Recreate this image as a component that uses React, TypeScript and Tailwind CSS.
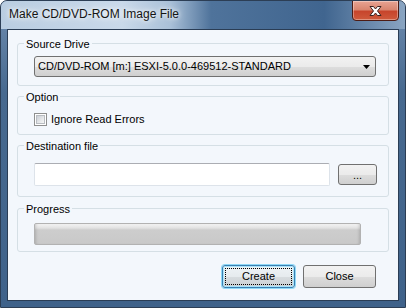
const ui = { fontFamily: '"Liberation Sans", Arial, sans-serif' };

function Group({
  label,
  className,
  children,
}: {
  label: string;
  className: string;
  children: React.ReactNode;
}) {
  return (
    <div className={["relative mx-[9px] rounded-[3px] border border-[#d5dfe5]", className].join(" ")}>
      <span className="absolute left-[6px] top-[-6px] bg-[#f3f7fc] px-[2px] text-[11px] leading-[13px] text-black">
        {label}
      </span>
      {children}
    </div>
  );
}

function WinButton({ children, focused }: { children: React.ReactNode; focused?: boolean }) {
  return (
    <button
      className={[
        "relative flex h-[23px] w-[73px] items-center justify-center rounded-[3px] border text-[11px] text-black",
        focused
          ? "border-[#3c7fb1] bg-[linear-gradient(#eef3f6_0%,#e6ebee_50%,#d8dde0_51%,#cbd0d3_100%)] shadow-[0_0_0_1px_#8fd9f7,inset_0_0_0_1px_#a7e4fb]"
          : "border-[#707070] bg-[linear-gradient(#f2f2f2_0%,#ebebeb_50%,#dddddd_51%,#cfcfcf_100%)]",
      ].join(" ")}
    >
      {focused && (
        <span className="absolute inset-[2px] border border-dotted border-black" />
      )}
      <span className="relative">{children}</span>
    </button>
  );
}

export default function App() {
  return (
    <div
      className="flex h-[308px] w-[406px] flex-col overflow-hidden rounded-t-[7px] border border-[#2c3e55] bg-[linear-gradient(180deg,#6f8db0_0%,#47698f_30%,#3f628a_100%)]"
      style={ui}
    >
      {/* title bar */}
      <div className="relative flex h-[28px] shrink-0 items-start bg-[linear-gradient(90deg,#b9cde1_0%,#c9d9ea_30%,#a9c0d8_42%,#4f739b_52%,#40658f_80%,#8aa5c2_100%)]">
        <span className="ml-[8px] mt-[5px] text-[12px] leading-[16px] text-[#141414] [text-shadow:0_0_8px_#ffffff,0_0_4px_#ffffff]">
          Make CD/DVD-ROM Image File
        </span>
        <div className="absolute right-[6px] top-[-1px] flex h-[21px] w-[47px] items-center justify-center rounded-b-[4px] border border-[#4d1c14] bg-[linear-gradient(#e8a493_0%,#d98670_45%,#c7452c_55%,#cf5a3c_100%)] shadow-[inset_0_0_0_1px_rgba(255,255,255,0.35)]">
          <svg width="15" height="12" viewBox="0 0 15 12">
            <path
              d="M2 1.5 L5.5 1.5 L7.5 4 L9.5 1.5 L13 1.5 L9.5 6 L13 10.5 L9.5 10.5 L7.5 8 L5.5 10.5 L2 10.5 L5.5 6 Z"
              fill="#ffffff"
              stroke="#3b2320"
              strokeWidth="1"
              strokeLinejoin="round"
            />
          </svg>
        </div>
      </div>

      {/* client area */}
      <div className="mx-[6px] mb-[6px] mt-0 flex h-[272px] flex-col border border-[#2a3d55] bg-[#f3f7fc] text-[11px] text-black">
        <div className="h-[13px]" />

        <Group label="Source Drive" className="h-[43px] pl-[16px] pt-[12px]">
          <div className="flex h-[21px] w-[342px] items-center justify-between rounded-[3px] border border-[#707070] bg-[linear-gradient(#f2f2f2_0%,#ebebeb_50%,#dddddd_51%,#cfcfcf_100%)] pl-[3px] pr-[5px]">
            <span className="leading-[13px]">CD/DVD-ROM [m:] ESXI-5.0.0-469512-STANDARD</span>
            <svg width="7" height="4" viewBox="0 0 7 4">
              <path d="M0 0 H7 L3.5 4 Z" fill="#000" />
            </svg>
          </div>
        </Group>

        <Group label="Option" className="mt-[10px] h-[39px] pl-[16px] pt-[16px]">
          <div className="flex items-center gap-[4px]">
            <span className="flex h-[13px] w-[13px] items-center justify-center border border-[#8e8f8f] bg-white">
              <span className="h-[9px] w-[9px] border border-[#b8bcc1] bg-[linear-gradient(135deg,#cbcfd5_0%,#e6e8ea_60%,#f6f6f6_100%)]" />
            </span>
            <span className="leading-[13px]">Ignore Read Errors</span>
          </div>
        </Group>

        <Group label="Destination file" className="mt-[10px] h-[52px] pl-[16px] pt-[17px]">
          <div className="flex items-center gap-[8px]">
            <div className="h-[23px] w-[296px] rounded-[2px] border border-[#dde3ea] border-t-[#abadb3] bg-white" />
            <button className="flex h-[21px] w-[39px] items-end justify-center rounded-[3px] border border-[#707070] bg-[linear-gradient(#f2f2f2_0%,#ebebeb_50%,#dddddd_51%,#cfcfcf_100%)] pb-[3px] text-[11px] leading-[11px]">
              ...
            </button>
          </div>
        </Group>

        <Group label="Progress" className="mt-[11px] h-[44px] pl-[16px] pt-[14px]">
          <div className="h-[22px] w-[327px] rounded-[2px] border border-[#b2b2b2] bg-[linear-gradient(#f3f3f3_0%,#e2e2e2_20%,#cdcdcd_30%,#c9c9c9_100%)] shadow-[inset_3px_0_3px_-2px_rgba(0,0,0,0.15),inset_-3px_0_3px_-2px_rgba(0,0,0,0.15)]" />
        </Group>

        <div className="mt-[13px] flex justify-end gap-[8px] pr-[22px]">
          <WinButton focused>Create</WinButton>
          <WinButton>Close</WinButton>
        </div>
      </div>
    </div>
  );
}
